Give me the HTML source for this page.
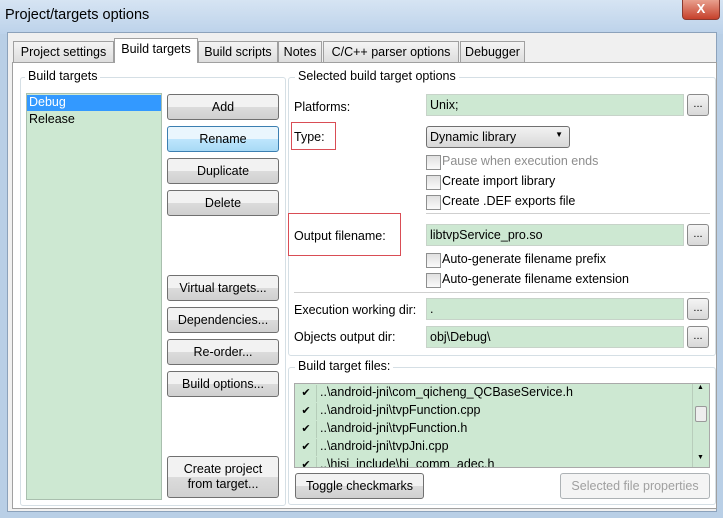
<!DOCTYPE html>
<html><head><meta charset="utf-8"><style>
*{box-sizing:border-box;margin:0;padding:0}
body{width:723px;height:518px;overflow:hidden;background:#b9cfe6;font-family:"Liberation Sans","DejaVu Sans",sans-serif;font-size:12px;color:#000;position:relative}
.a{position:absolute}
.title{left:0;top:0;width:723px;height:34px;background:linear-gradient(#d6e4f3,#bcd2ea)}
.win{left:7px;top:32px;width:710px;height:480px;background:#f0f0f0;border:1px solid #8ca2bb}
.tab{position:absolute;top:41px;height:22px;border:1px solid #a0a0a0;border-bottom:none;background:linear-gradient(#f4f4f4,#dcdcdc);padding:3px 0 0 0;text-align:center;font-size:12.5px}
.tab.act{top:38px;height:25px;background:#fff;z-index:2}
.panel{left:12px;top:62px;width:705px;height:447px;background:#fff;border:1px solid #a0a0a0}
.grp{position:absolute;border:1px solid #d5dfe5;border-radius:3px}
.gt{position:absolute;background:#fff;padding:0 3px;font-size:12.5px}
.btn{position:absolute;left:167px;width:112px;height:26px;border:1px solid #707070;border-radius:3px;background:linear-gradient(#f2f2f2 50%,#dcdcdc 50%,#d0d0d0);text-align:center;line-height:24px;font-size:12.5px}
.fld{position:absolute;left:426px;height:22px;background:#cde8d2;border:1px solid #c7d3c9;padding:3px 3px;font-size:12.5px}
.dots{position:absolute;left:687px;width:22px;height:22px;border:1px solid #8a8a8a;border-radius:3px;background:linear-gradient(#f4f4f4,#d8d8d8);text-align:center;line-height:18px;font-size:11px}
.lbl{position:absolute;left:294px;font-size:12.5px}
.cb{position:absolute;left:426px;font-size:12.5px;padding-left:16px}
.cb:before{content:"";position:absolute;left:0;top:1px;width:13px;height:13px;border:1px solid #8e8f8f;background:linear-gradient(#e0e0e0,#fafafa)}
.red{position:absolute;border:1px solid #d94d55}
.row{position:absolute;left:296px;height:18px;font-size:12.5px;padding-left:24px;width:395px}
.row:before{content:"✔";position:absolute;left:0;top:0;width:20px;height:17px;border-right:1px solid #b5cdb9;text-align:center;font-size:11px;line-height:17px}
</style></head><body>
<div class="a title"></div>
<div class="a" style="left:5px;top:7px;font-size:14.5px">Project/targets options</div>
<div class="a" style="left:682px;top:0;width:38px;height:20px;background:linear-gradient(#e8a08e,#c6412b);border:1px solid #8a3a30;border-top:none;border-radius:0 0 4px 4px;color:#fff;font-weight:bold;text-align:center;line-height:18px;font-size:13px">X</div>
<div class="a win"></div>
<div class="tab" style="left:13px;width:101px">Project settings</div>
<div class="tab act" style="left:114px;width:84px">Build targets</div>
<div class="tab" style="left:198px;width:80px">Build scripts</div>
<div class="tab" style="left:278px;width:44px">Notes</div>
<div class="tab" style="left:323px;width:136px">C/C++ parser options</div>
<div class="tab" style="left:460px;width:65px">Debugger</div>
<div class="a panel"></div>

<div class="grp" style="left:20px;top:77px;width:266px;height:429px"></div>
<div class="gt" style="left:25px;top:69px">Build targets</div>
<div class="a" style="left:26px;top:93px;width:136px;height:407px;background:#cde8d2;border:1px solid #a9bfae"></div>
<div class="a" style="left:27px;top:95px;width:134px;height:16px;background:#3399ff;color:#fff;padding-left:2px;font-size:12.5px">Debug</div>
<div class="a" style="left:29px;top:112px;font-size:12.5px">Release</div>
<div class="btn" style="top:94px">Add</div>
<div class="btn" style="top:126px;background:linear-gradient(#eaf6fd 50%,#bee6fd 50%,#a7d9f5);border-color:#3c7fb1">Rename</div>
<div class="btn" style="top:158px">Duplicate</div>
<div class="btn" style="top:190px">Delete</div>
<div class="btn" style="top:275px">Virtual targets...</div>
<div class="btn" style="top:307px">Dependencies...</div>
<div class="btn" style="top:339px">Re-order...</div>
<div class="btn" style="top:371px">Build options...</div>
<div class="btn" style="top:456px;height:42px;line-height:15px;padding-top:5px">Create project<br>from target...</div>

<div class="grp" style="left:288px;top:77px;width:428px;height:279px"></div>
<div class="gt" style="left:295px;top:69px">Selected build target options</div>
<div class="lbl" style="top:100px">Platforms:</div>
<div class="fld" style="top:94px;width:258px">Unix;</div>
<div class="dots" style="top:94px">...</div>
<div class="red" style="left:291px;top:122px;width:45px;height:28px"></div>
<div class="lbl" style="top:130px">Type:</div>
<div class="a" style="left:426px;top:126px;width:144px;height:22px;border:1px solid #707070;border-radius:3px;background:linear-gradient(#f2f2f2,#d8d8d8);padding:3px 3px;font-size:12.5px">Dynamic library<span style="position:absolute;right:6px;top:3px;font-size:8px">▼</span></div>
<div class="cb" style="top:154px;color:#8d8d8d">Pause when execution ends</div>
<div class="cb" style="top:174px">Create import library</div>
<div class="cb" style="top:194px">Create .DEF exports file</div>
<div class="a" style="left:426px;top:213px;width:284px;height:1px;background:#cfcfcf"></div>
<div class="red" style="left:288px;top:213px;width:113px;height:43px"></div>
<div class="lbl" style="top:229px">Output filename:</div>
<div class="fld" style="top:224px;width:258px">libtvpService_pro.so</div>
<div class="dots" style="top:224px">...</div>
<div class="cb" style="top:252px">Auto-generate filename prefix</div>
<div class="cb" style="top:272px">Auto-generate filename extension</div>
<div class="a" style="left:294px;top:292px;width:416px;height:1px;background:#cfcfcf"></div>
<div class="lbl" style="top:303px">Execution working dir:</div>
<div class="fld" style="top:298px;width:258px">.</div>
<div class="dots" style="top:298px">...</div>
<div class="lbl" style="top:330px">Objects output dir:</div>
<div class="fld" style="top:326px;width:258px">obj\Debug\</div>
<div class="dots" style="top:326px">...</div>

<div class="grp" style="left:288px;top:367px;width:428px;height:138px"></div>
<div class="gt" style="left:295px;top:359px">Build target files:</div>
<div class="a" style="left:294px;top:383px;width:416px;height:85px;background:#cde8d2;border:1px solid #a9a9a9;overflow:hidden">
<div class="a" style="right:0;top:0;width:17px;height:83px;background:#cde8d2;border-left:1px solid #b8cdbb"><div class="a" style="left:2px;top:22px;width:12px;height:16px;border:1px solid #9a9a9a;border-radius:2px;background:#eee"></div><div class="a" style="left:4px;top:0;font-size:7px">▲</div><div class="a" style="left:4px;top:70px;font-size:7px">▼</div></div>
</div>
<div class="row" style="top:385px">..\android-jni\com_qicheng_QCBaseService.h</div>
<div class="row" style="top:403px">..\android-jni\tvpFunction.cpp</div>
<div class="row" style="top:421px">..\android-jni\tvpFunction.h</div>
<div class="row" style="top:439px">..\android-jni\tvpJni.cpp</div>
<div class="row" style="top:457px;height:10px;overflow:hidden">..\hisi_include\hi_comm_adec.h</div>
<div class="a" style="left:295px;top:473px;width:129px;height:26px;border:1px solid #707070;border-radius:3px;background:linear-gradient(#f2f2f2 50%,#dcdcdc 50%,#d0d0d0);text-align:center;line-height:24px;font-size:12.5px">Toggle checkmarks</div>
<div class="a" style="left:560px;top:473px;width:150px;height:26px;border:1px solid #adb2b5;border-radius:3px;background:#f4f4f4;color:#a0a0a0;text-align:center;line-height:24px;font-size:12.5px">Selected file properties</div>
</body></html>
